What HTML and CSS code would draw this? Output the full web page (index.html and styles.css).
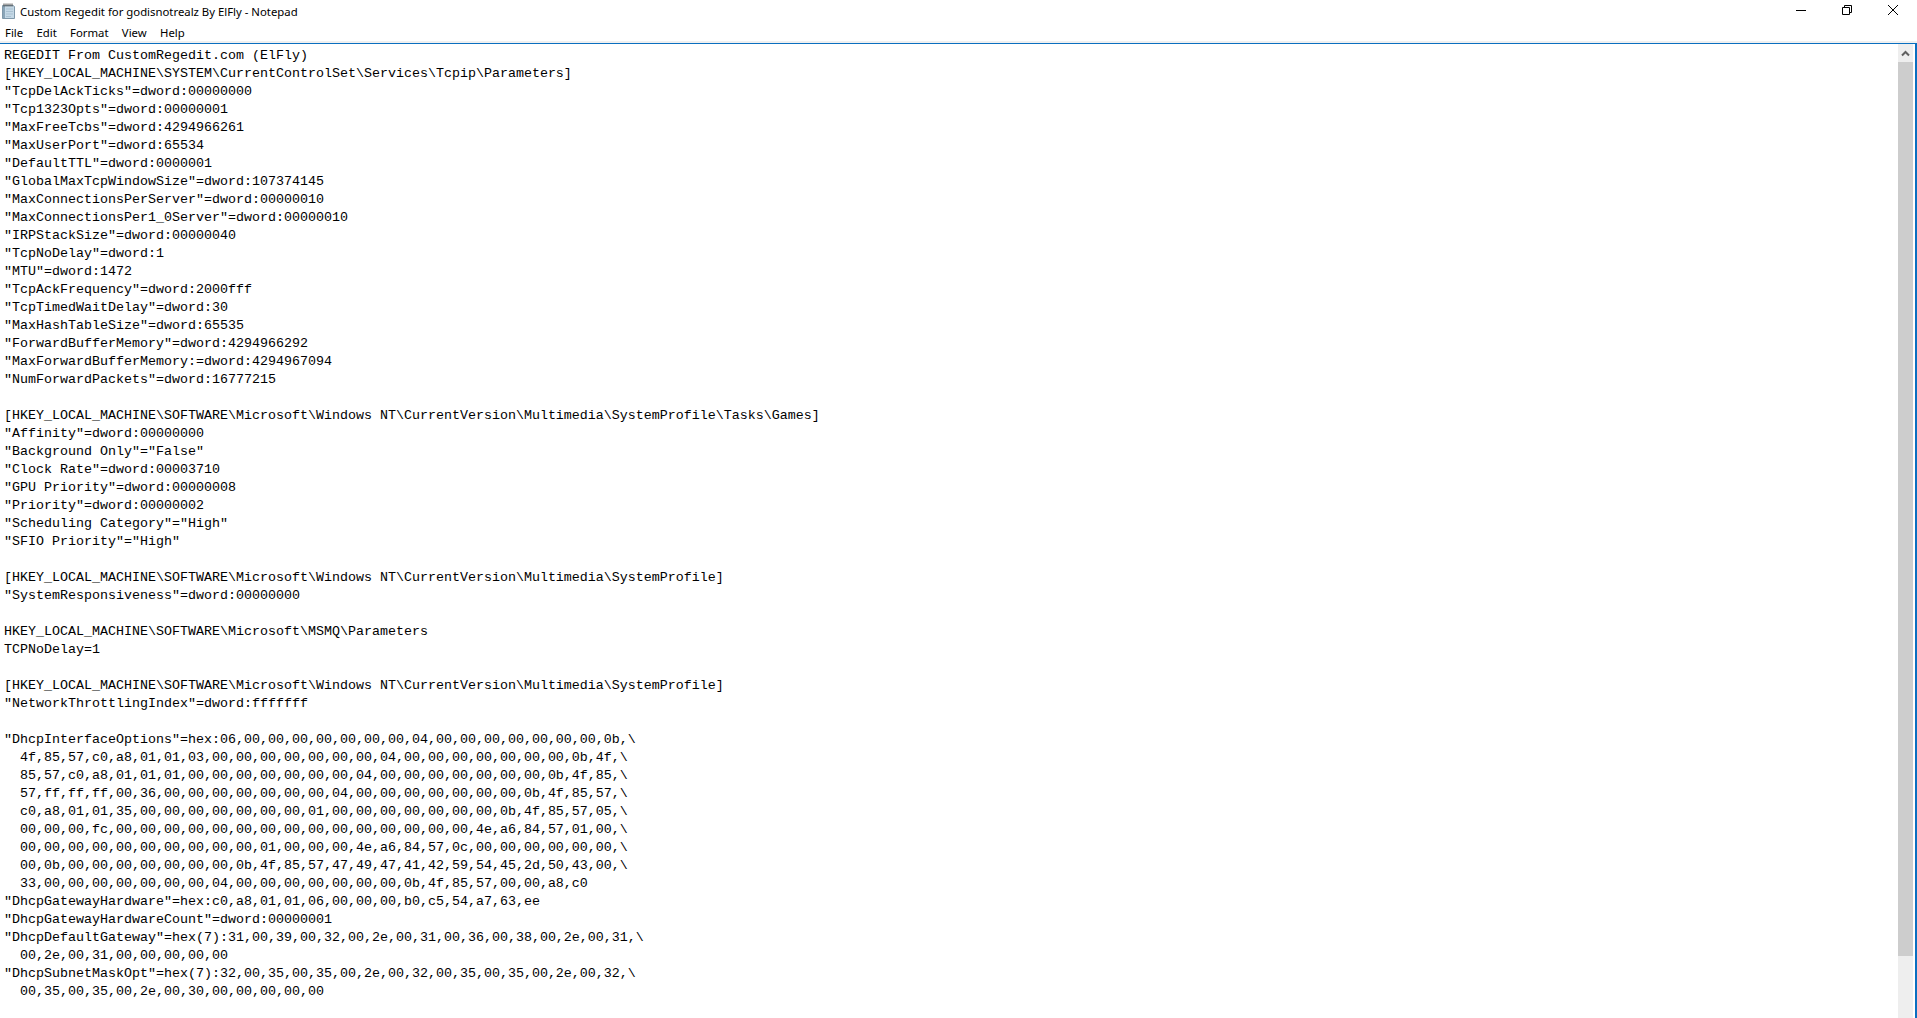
FILE: index.html
```html
<!DOCTYPE html>
<html lang="en">
<head>
<meta charset="utf-8">
<title>Custom Regedit for godisnotrealz By ElFly - Notepad</title>
<link rel="stylesheet" href="styles.css">
</head>
<body>
<div class="window">
  <header class="titlebar">
    <svg class="app-icon" width="16" height="16" viewBox="0 0 16 16"><path d="M1.500 2.500h10.500l1.500 1v12H1.500z" fill="#c4d8e6" stroke="#7f98aa"/><path d="M2 3h2v12H2z" fill="#8aa5b8"/><path d="M5 6h7M5 8.500h7M5 11h7M5 13.500h5" stroke="#a9c1d2"/><path d="M3 .5v3M5 .5v3M7 .5v3M9 .5v3M11 .5v3" stroke="#4a4a4a"/></svg>
    <span class="title">Custom Regedit for godisnotrealz By ElFly - Notepad</span>
    <div class="controls">
      <span class="ctl"><svg width="10" height="10" viewBox="0 0 10 10"><path d="M0 5.500h10" stroke="#000" fill="none"/></svg></span>
      <span class="ctl"><svg width="10" height="10" viewBox="0 0 10 10"><path d="M.5 2.500h7v7h-7zM2.500 2.500V.5h7v7h-2" stroke="#000" fill="none"/></svg></span>
      <span class="ctl"><svg width="10" height="10" viewBox="0 0 10 10"><path d="M0 0l10 10M10 0L0 10" stroke="#000" fill="none"/></svg></span>
    </div>
  </header>
  <nav class="menubar"><span>File</span><span>Edit</span><span>Format</span><span>View</span><span>Help</span></nav>
  <main class="client">
<pre class="text">REGEDIT From CustomRegedit.com (ElFly)
[HKEY_LOCAL_MACHINE\SYSTEM\CurrentControlSet\Services\Tcpip\Parameters]
"TcpDelAckTicks"=dword:00000000
"Tcp1323Opts"=dword:00000001
"MaxFreeTcbs"=dword:4294966261
"MaxUserPort"=dword:65534
"DefaultTTL"=dword:0000001
"GlobalMaxTcpWindowSize"=dword:107374145
"MaxConnectionsPerServer"=dword:00000010
"MaxConnectionsPer1_0Server"=dword:00000010
"IRPStackSize"=dword:00000040
"TcpNoDelay"=dword:1
"MTU"=dword:1472
"TcpAckFrequency"=dword:2000fff
"TcpTimedWaitDelay"=dword:30
"MaxHashTableSize"=dword:65535
"ForwardBufferMemory"=dword:4294966292
"MaxForwardBufferMemory:=dword:4294967094
"NumForwardPackets"=dword:16777215

[HKEY_LOCAL_MACHINE\SOFTWARE\Microsoft\Windows NT\CurrentVersion\Multimedia\SystemProfile\Tasks\Games]
"Affinity"=dword:00000000
"Background Only"="False"
"Clock Rate"=dword:00003710
"GPU Priority"=dword:00000008
"Priority"=dword:00000002
"Scheduling Category"="High"
"SFIO Priority"="High"

[HKEY_LOCAL_MACHINE\SOFTWARE\Microsoft\Windows NT\CurrentVersion\Multimedia\SystemProfile]
"SystemResponsiveness"=dword:00000000

HKEY_LOCAL_MACHINE\SOFTWARE\Microsoft\MSMQ\Parameters
TCPNoDelay=1

[HKEY_LOCAL_MACHINE\SOFTWARE\Microsoft\Windows NT\CurrentVersion\Multimedia\SystemProfile]
"NetworkThrottlingIndex"=dword:fffffff

"DhcpInterfaceOptions"=hex:06,00,00,00,00,00,00,00,04,00,00,00,00,00,00,00,0b,\
  4f,85,57,c0,a8,01,01,03,00,00,00,00,00,00,00,04,00,00,00,00,00,00,00,0b,4f,\
  85,57,c0,a8,01,01,01,00,00,00,00,00,00,00,04,00,00,00,00,00,00,00,0b,4f,85,\
  57,ff,ff,ff,00,36,00,00,00,00,00,00,00,04,00,00,00,00,00,00,00,0b,4f,85,57,\
  c0,a8,01,01,35,00,00,00,00,00,00,00,01,00,00,00,00,00,00,00,0b,4f,85,57,05,\
  00,00,00,fc,00,00,00,00,00,00,00,00,00,00,00,00,00,00,00,4e,a6,84,57,01,00,\
  00,00,00,00,00,00,00,00,00,00,01,00,00,00,4e,a6,84,57,0c,00,00,00,00,00,00,\
  00,0b,00,00,00,00,00,00,00,0b,4f,85,57,47,49,47,41,42,59,54,45,2d,50,43,00,\
  33,00,00,00,00,00,00,00,04,00,00,00,00,00,00,00,0b,4f,85,57,00,00,a8,c0
"DhcpGatewayHardware"=hex:c0,a8,01,01,06,00,00,00,b0,c5,54,a7,63,ee
"DhcpGatewayHardwareCount"=dword:00000001
"DhcpDefaultGateway"=hex(7):31,00,39,00,32,00,2e,00,31,00,36,00,38,00,2e,00,31,\
  00,2e,00,31,00,00,00,00,00
"DhcpSubnetMaskOpt"=hex(7):32,00,35,00,35,00,2e,00,32,00,35,00,35,00,2e,00,32,\
  00,35,00,35,00,2e,00,30,00,00,00,00,00</pre>
    <aside class="scrollbar">
      <div class="arrow"><svg width="9" height="7" viewBox="0 0 9 7"><path d="M1 5.500l3.500-3.500 3.500 3.500" stroke="#606060" stroke-width="2" fill="none"/></svg></div>
      <div class="thumb"></div>
    </aside>
  </main>
</div>
</body>
</html>
```

FILE: styles.css
```css
* { box-sizing: border-box; }
html, body { margin: 0; height: 100%; background: #fff; overflow: hidden; }
.window { height: 1018px; display: flex; flex-direction: column; color: #000; }
.titlebar { height: 24px; flex: none; display: flex; align-items: center; padding: 0 0 2px 1px; }
.app-icon { flex: none; }
.title { margin-left: 3px; font-family: "Noto Sans", sans-serif; font-size: 11.35px; }
.controls { margin-left: auto; display: flex; align-self: flex-start; padding-right: 1px; }
.ctl { width: 46px; height: 20px; display: flex; align-items: center; justify-content: center; }
.menubar { height: 19px; flex: none; display: flex; gap: 13.3px; padding: 0 5px; font-family: "Noto Sans", sans-serif; font-size: 11.35px; line-height: 17px; border-bottom: 2px solid #f0f0f0; }
.client { flex: 1; min-height: 0; display: flex; border-top: 1px solid #0a6fc0; border-right: 2px solid #0a6fc0; }
.text { flex: 1; margin: 0; padding: 3px 0 0 4px; font-family: "Liberation Mono", monospace; font-size: 13.33px; line-height: 18px; color: #000; overflow: hidden; }
.scrollbar { width: 17px; flex: none; background: #eee; padding-top: 1px; border-right: 2px solid #fff; }
.arrow { height: 17px; display: flex; align-items: center; justify-content: center; }
.thumb { height: 894px; background: #cdcdcd; }
```
